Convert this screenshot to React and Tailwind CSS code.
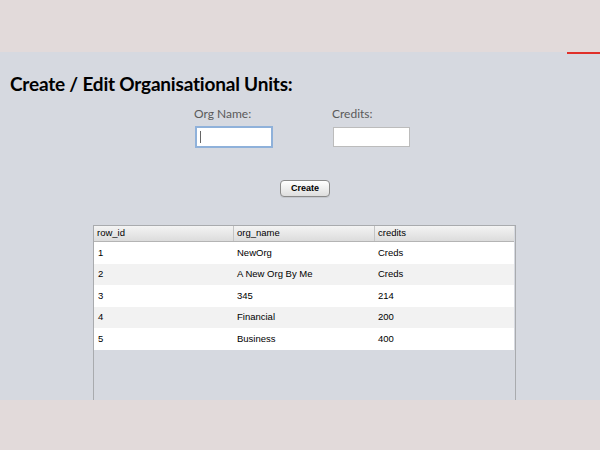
import React from 'react';

const rows = [
  { id: '1', name: 'NewOrg', credits: 'Creds' },
  { id: '2', name: 'A New Org By Me', credits: 'Creds' },
  { id: '3', name: '345', credits: '214' },
  { id: '4', name: 'Financial', credits: '200' },
  { id: '5', name: 'Business', credits: '400' },
];

const App = () => {
  return (
    <div className="w-[600px] h-[450px] flex flex-col bg-[#e2dada] overflow-hidden">
      {/* 顶部空白区 */}
      <div className="h-[52px] shrink-0" />

      {/* 主面板 */}
      <div className="relative h-[348px] shrink-0 bg-[#d6d9e0] flex flex-col overflow-hidden">
        <div className="absolute right-0 top-0 w-[33px] h-[2px] bg-[#e0302a]" />

        <h1 className="mt-[20px] ml-[10px] text-[19px] leading-[24px] font-bold text-black tracking-[-0.2px] font-['Lato','DejaVu_Sans',sans-serif]">
          Create / Edit Organisational Units:
        </h1>

        <div className="mt-[10px] ml-[195px] flex gap-[60px] font-['Lato','DejaVu_Sans',sans-serif]">
          <div className="flex flex-col">
            <label className="text-[12px] leading-[16px] text-[#5a5a5a] ml-[-1px]">Org Name:</label>
            <div className="mt-[4px] w-[78px] h-[22px] bg-white border-2 border-[#8fb1da] flex items-center pl-[3px]">
              <div className="w-px h-[12px] bg-[#666]" />
            </div>
          </div>
          <div className="flex flex-col">
            <label className="text-[12px] leading-[16px] text-[#5a5a5a] ml-[-1px]">Credits:</label>
            <div className="mt-[5px] w-[77px] h-[20px] bg-white border border-[#bcbcbc]" />
          </div>
        </div>

        <div className="mt-[32px] flex justify-center pl-[10px]">
          <button className="w-[50px] h-[17px] rounded-[4px] border border-[#8a8a8a] bg-gradient-to-b from-white to-[#dedede] text-[9px] font-bold text-black font-['Liberation_Sans',sans-serif] shadow-[0_1px_0_rgba(0,0,0,0.08)]">
            Create
          </button>
        </div>

        {/* 表格 */}
        <div className="mt-[28px] ml-[93px] w-[423px] flex-1 border border-[#a9abae] border-b-0 flex flex-col font-['Liberation_Sans',sans-serif] text-[9.5px] text-black">
          <div className="h-[16px] flex bg-gradient-to-b from-[#f4f4f4] to-[#dcdcdc] border-b border-[#b4b4b4] mr-px">
            <div className="w-[140px] pl-[3px] flex items-center border-r border-[#c4c4c4]">row_id</div>
            <div className="w-[141px] pl-[3px] flex items-center border-r border-[#c4c4c4]">org_name</div>
            <div className="flex-1 pl-[3px] flex items-center">credits</div>
          </div>
          {rows.map((r, i) => (
            <div
              key={r.id}
              className={`h-[21.6px] flex items-center mr-px ${i % 2 === 1 ? 'bg-[#f2f2f2]' : 'bg-white'}`}
            >
              <div className="w-[140px] pl-[4px]">{r.id}</div>
              <div className="w-[141px] pl-[3px]">{r.name}</div>
              <div className="flex-1 pl-[3px]">{r.credits}</div>
            </div>
          ))}
        </div>
      </div>

      <div className="flex-1" />
    </div>
  );
};

export default App;
